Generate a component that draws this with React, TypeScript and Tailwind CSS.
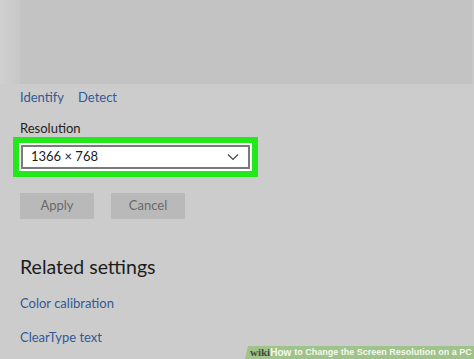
export default function App() {
  return (
    <div className="relative h-[359px] w-[474px] overflow-hidden bg-[#cccccc] font-['Lato','Noto_Sans',sans-serif]">
      {/* preview area */}
      <div className="flex h-[84px]">
        <div className="w-[20px] bg-gradient-to-r from-[#d0d0d0] to-[#c8c8c8]" />
        <div className="flex-1 border-r-2 border-[#c9c9c9] bg-[#c3c3c3]" />
      </div>

      <div className="px-[20px]">
        <div className="flex gap-[14px] pt-[4px] text-[13px] leading-[19px] text-[#2f5a96]">
          <span>Identify</span>
          <span>Detect</span>
        </div>

        <div className="pt-[12px] text-[13px] leading-[18px] text-[#1e1e1e]">Resolution</div>

        <div className="-ml-[7px] w-[245px] border-[6px] border-[#22e81c] bg-white p-[2px]">
          <div className="flex h-[24px] items-center justify-between border-2 border-[#7a7a7a] bg-white pl-[8px] pr-[9px] text-[13px] text-[#1a1a1a]">
            <span>1366 × 768</span>
            <svg width="12" height="8" viewBox="0 0 12 8" fill="none">
              <path d="M1 1.5 6 6.5 11 1.5" stroke="#444" strokeWidth="1.2" />
            </svg>
          </div>
        </div>

        <div className="mt-[16px] flex gap-[17px] text-[13px] text-[#6a6a6a]">
          <div className="flex h-[26px] w-[74px] items-center justify-center bg-[#b9b9b9]">Apply</div>
          <div className="flex h-[26px] w-[74px] items-center justify-center bg-[#b9b9b9]">Cancel</div>
        </div>

        <div className="pt-[35px] text-[19.5px] leading-[26px] text-[#1c1c1c]">Related settings</div>
        <div className="pt-[14px] text-[13px] leading-[18px] text-[#2f5a96]">Color calibration</div>
        <div className="pt-[16px] text-[13px] leading-[18px] text-[#2f5a96]">ClearType text</div>
      </div>

      {/* watermark banner */}
      <div className="absolute bottom-0 right-0 flex h-[13px] w-[229px] items-center whitespace-nowrap bg-[#9fc38a] pl-[5px] leading-none text-white [clip-path:polygon(3px_0,100%_0,100%_100%,0_100%)]">
        <span className="font-['Liberation_Serif',serif] text-[11px] font-bold text-[#3f4a37]">wiki</span>
        <span className="font-['Liberation_Sans',sans-serif] text-[10px] font-bold text-[#f4f8ef]">How</span>
        <span className="ml-[3px] font-['Liberation_Sans',sans-serif] text-[9px] font-bold text-[#f4f8ef]">to Change the Screen Resolution on a PC</span>
      </div>
    </div>
  );
}
